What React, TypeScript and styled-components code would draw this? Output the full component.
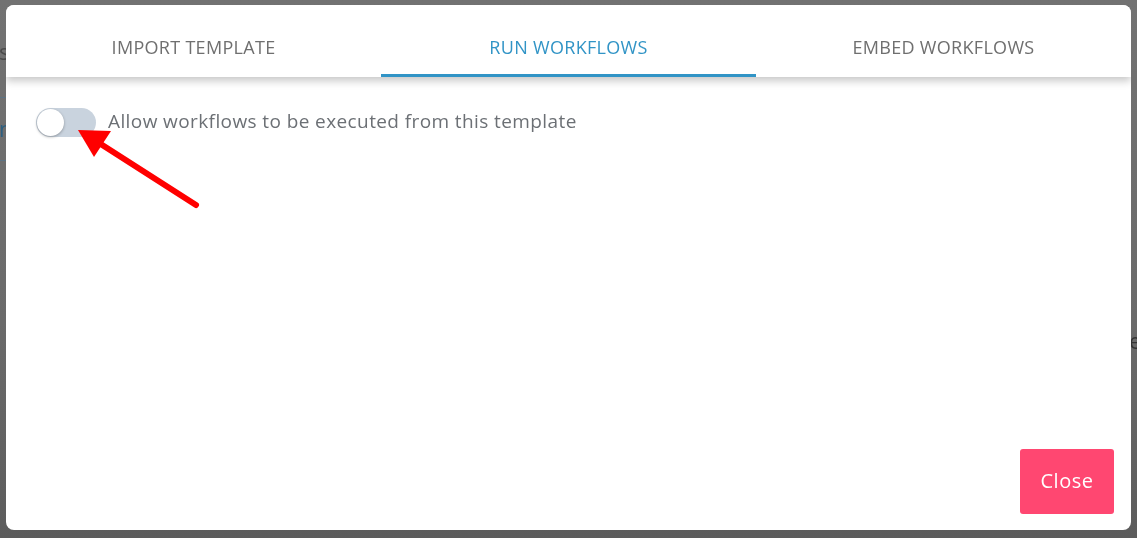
import React, { useState } from "react";
import styled, { createGlobalStyle } from "styled-components";

const Global = createGlobalStyle`
  html, body { margin: 0; padding: 0; }
  body {
    width: 1137px; height: 538px; overflow: hidden;
    background: linear-gradient(180deg, #727272 0%, #6a6a6a 60%, #5c5c5c 100%);
    font-family: "Open Sans", "Noto Sans", sans-serif;
  }
`;

const Backdrop = styled.div`
  position: fixed; inset: 0; z-index: 0; pointer-events: none;
`;

const BackText = styled.span<{ $x: number; $y: number; $c: string }>`
  position: absolute; left: ${p => p.$x}px; top: ${p => p.$y}px;
  font-size: 22px; color: ${p => p.$c}; font-family: "Open Sans", sans-serif;
  white-space: nowrap;
`;

const BackLine = styled.div<{ $y: number }>`
  position: absolute; left: 0; width: 40px; top: ${p => p.$y}px; height: 1px;
  background: #5c7384;
`;

const Page = styled.div`
  position: relative; z-index: 1;
  padding: 5px 6px 8px 6px;
`;

const Modal = styled.div`
  width: 1125px; height: 525px; background: #fff; border-radius: 8px;
  display: flex; flex-direction: column; position: relative; overflow: hidden;
`;

const TabBar = styled.div`
  display: flex; height: 72px; box-shadow: 0 4px 8px rgba(0,0,0,0.22);
  position: relative; z-index: 1; background: #fff;
`;

const Tab = styled.button<{ $active?: boolean }>`
  flex: 1; border: none; background: none; cursor: pointer;
  font-family: "Open Sans", sans-serif; font-weight: 500; font-size: 18px;
  letter-spacing: 0.3px;
  color: ${p => (p.$active ? "#3194c6" : "#6f6f6f")};
  border-bottom: 3px solid ${p => (p.$active ? "#3194c6" : "transparent")};
  padding: 15px 0 0 0; text-transform: uppercase;
`;

const Body = styled.div`
  flex: 1; padding: 31px 30px 0 30px;
`;

const Row = styled.label`
  display: flex; align-items: center; gap: 12px; cursor: pointer;
`;

const Track = styled.span<{ $on: boolean }>`
  width: 60px; height: 29px; border-radius: 15px; flex: none;
  background: ${p => (p.$on ? "#3194c6" : "#c9d3de")}; position: relative;
`;

const Knob = styled.span<{ $on: boolean }>`
  position: absolute; top: 1px; left: ${p => (p.$on ? 32 : 1)}px;
  width: 27px; height: 27px; border-radius: 50%; background: #fff;
  box-shadow: 0 1px 3px rgba(0,0,0,0.3);
`;

const Label = styled.span`
  font-size: 19px; color: #6c7075; font-family: "Open Sans", sans-serif;
  letter-spacing: 0.4px; margin-top: -3px;
`;

const Footer = styled.div`
  display: flex; justify-content: flex-end; padding: 0 17px 16px 0;
`;

const CloseBtn = styled.button`
  width: 94px; height: 65px; border: none; border-radius: 3px;
  background: #ff4771; color: #fff; font-size: 20px; letter-spacing: 0.5px;
  font-family: "Open Sans", sans-serif; cursor: pointer; padding: 0 0 2px 0;
`;

const Arrow = styled.svg`
  position: absolute; left: 0; top: 0; z-index: 5; pointer-events: none;
`;

export default function App() {
  const [on, setOn] = useState(false);
  return (
    <>
      <Global />
      <Backdrop>
        <BackText $x={-1} $y={36} $c="#4a4a4a">settings</BackText>
        <BackLine $y={97} />
        <BackText $x={-1} $y={113} $c="#2d5f80">name</BackText>
        <BackLine $y={160} />
        <BackText $x={1129} $y={325} $c="#333">e</BackText>
      </Backdrop>
      <Page>
        <Modal>
          <TabBar>
            <Tab>Import Template</Tab>
            <Tab $active>Run Workflows</Tab>
            <Tab>Embed Workflows</Tab>
          </TabBar>
          <Body>
            <Row onClick={() => setOn(!on)}>
              <Track $on={on}><Knob $on={on} /></Track>
              <Label>Allow workflows to be executed from this template</Label>
            </Row>
          </Body>
          <Footer>
            <CloseBtn>Close</CloseBtn>
          </Footer>
        </Modal>
      </Page>
      <Arrow width="1137" height="538" viewBox="0 0 1137 538">
        <line x1="196" y1="205" x2="96" y2="141" stroke="#ff0000" strokeWidth="6" strokeLinecap="round" />
        <polygon points="78,130 111,131 94,157" fill="#ff0000" />
      </Arrow>
    </>
  );
}
